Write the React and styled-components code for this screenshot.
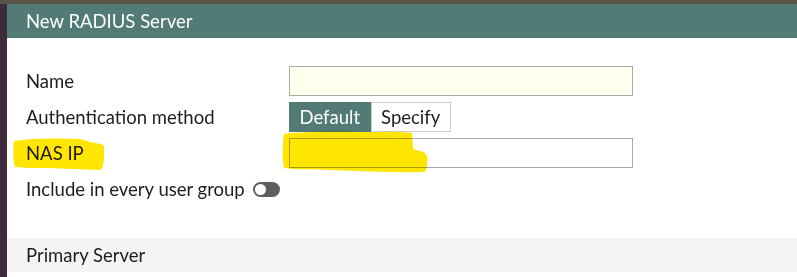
import React from "react";
import styled, { createGlobalStyle } from "styled-components";

const Global = createGlobalStyle`
  html, body { margin: 0; padding: 0; background: #ffffff; }
  body { font-family: Lato, "Open Sans", "Liberation Sans", sans-serif; }
`;

const Page = styled.div`
  width: 797px;
  height: 277px;
  display: grid;
  grid-template-rows: 4px 1fr;
  overflow: hidden;
  position: relative;
`;

const TopStrip = styled.div`
  background: #5a5347;
`;

const Frame = styled.div`
  display: grid;
  grid-template-columns: 7px 1fr;
  min-height: 0;
`;

const SideStrip = styled.div`
  background: #3d2a3c;
`;

const Panel = styled.div`
  display: flex;
  flex-direction: column;
  background: #ffffff;
  min-width: 0;
`;

const Header = styled.div`
  height: 34px;
  background: #527b76;
  color: #ffffff;
  font-size: 18.5px;
  display: flex;
  align-items: center;
  padding-left: 19px;
`;

const Form = styled.div`
  display: flex;
  flex-direction: column;
  gap: 6px;
  padding-top: 28px;
`;

const Row = styled.div`
  display: grid;
  grid-template-columns: 282px 1fr;
  align-items: center;
  height: 30px;
`;

const Label = styled.div`
  padding-left: 19px;
  font-size: 18.5px;
  color: #1e1e1e;
  display: flex;
  align-items: center;
  gap: 8px;
`;

const TextInput = styled.div`
  box-sizing: border-box;
  width: 344px;
  height: 30px;
  border: 1px solid #aaaaaa;
  background: ${(p) => (p.$filled ? "#ffffee" : "#ffffff")};
`;

const ButtonGroup = styled.div`
  display: flex;
  height: 30px;
`;

const SegButton = styled.div`
  box-sizing: border-box;
  height: 30px;
  padding: 0 9.5px;
  display: flex;
  align-items: center;
  font-size: 18.5px;
  border: 1px solid ${(p) => (p.$active ? "#527b76" : "#cccccc")};
  background: ${(p) => (p.$active ? "#527b76" : "#ffffff")};
  color: ${(p) => (p.$active ? "#ffffff" : "#1e1e1e")};
`;

const Toggle = styled.span`
  display: inline-flex;
  align-items: center;
  box-sizing: border-box;
  width: 27px;
  height: 15px;
  border-radius: 8px;
  background: #5e5e5e;
  padding-left: 2px;
  &::before {
    content: "";
    width: 11px;
    height: 11px;
    border-radius: 50%;
    background: #ffffff;
  }
`;

const Section = styled.div`
  margin-top: 34px;
  height: 34px;
  background: #f4f4f4;
  display: flex;
  align-items: center;
  padding-left: 19px;
  font-size: 18.5px;
  color: #1e1e1e;
`;

const Highlight = styled.svg`
  position: absolute;
  left: 0;
  top: 0;
  pointer-events: none;
  mix-blend-mode: multiply;
`;

export default function App() {
  return (
    <>
      <Global />
      <Page>
        <TopStrip />
        <Frame>
          <SideStrip />
          <Panel>
            <Header>New RADIUS Server</Header>
            <Form>
              <Row>
                <Label>Name</Label>
                <TextInput $filled />
              </Row>
              <Row>
                <Label>Authentication method</Label>
                <ButtonGroup>
                  <SegButton $active>Default</SegButton>
                  <SegButton>Specify</SegButton>
                </ButtonGroup>
              </Row>
              <Row>
                <Label>NAS IP</Label>
                <TextInput />
              </Row>
              <Row>
                <Label>
                  Include in every user group <Toggle />
                </Label>
              </Row>
            </Form>
            <Section>Primary Server</Section>
          </Panel>
        </Frame>
        <Highlight width="797" height="277" viewBox="0 0 797 277">
          <path
            fill="#ffe600"
            d="M14 141 C30 138 60 138 80 139 L90 142 C96 143 102 144 104 146 L104 160 C103 165 103 168 100 170 C80 169 50 168 30 168 L15 167 C13 160 13 150 14 141 Z"
          />
          <path
            fill="#ffe600"
            d="M284 134 C300 132 330 131 360 132 C380 132 400 131 412 133 L413 149 C420 151 426 152 427 156 C428 162 427 168 425 172 C400 173 360 171 330 170 C310 169 295 170 284 168 C283 160 282 152 283 148 C283 142 283 138 284 134 Z"
          />
        </Highlight>
      </Page>
    </>
  );
}
